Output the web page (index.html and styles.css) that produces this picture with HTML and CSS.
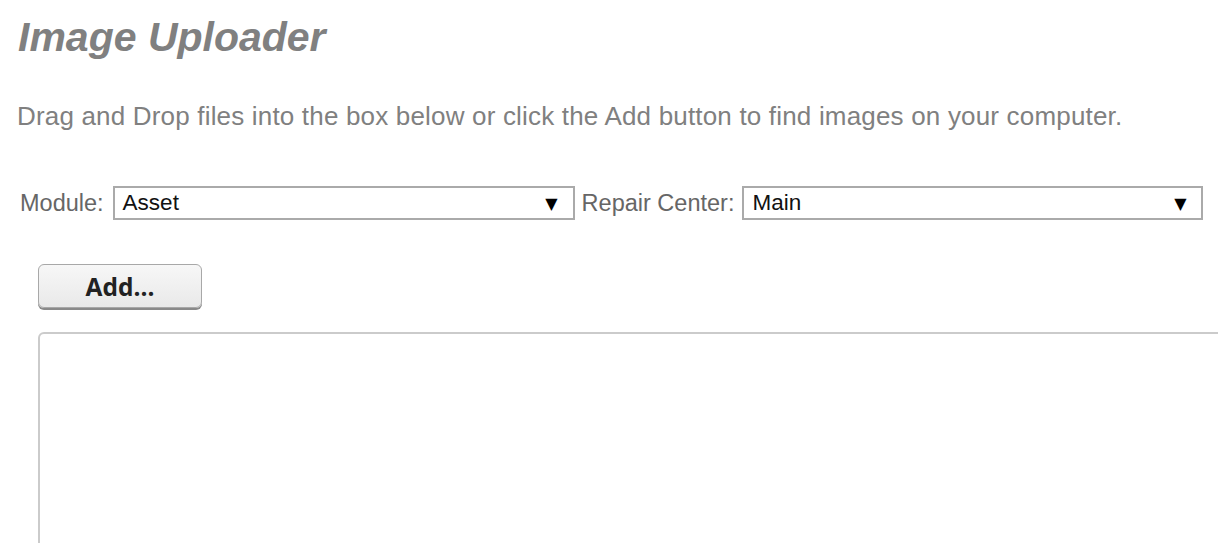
FILE: index.html
```html
<!DOCTYPE html>
<html>
<head>
<meta charset="utf-8">
<title>Image Uploader</title>
<link rel="stylesheet" href="styles.css">
</head>
<body>
<div class="page">
  <h1 class="title">Image Uploader</h1>
  <p class="intro">Drag and Drop files into the box below or click the Add button to find images on your computer.</p>
  <div class="filters">
    <label class="field-label">Module:</label>
    <div class="select select-module"><span class="select-value">Asset</span><span class="select-arrow">▼</span></div>
    <label class="field-label label-center">Repair Center:</label>
    <div class="select select-center"><span class="select-value">Main</span><span class="select-arrow">▼</span></div>
  </div>
  <div class="actions">
    <button class="add-btn" type="button">Add...</button>
  </div>
  <div class="dropzone"></div>
</div>
</body>
</html>
```

FILE: styles.css
```css
html, body {
  margin: 0;
  padding: 0;
  background: #fff;
  overflow: hidden;
}
body {
  font-family: "Liberation Sans", Arial, sans-serif;
}
.page {
  width: 1260px;
}
.title {
  margin: 15px 0 0 18px;
  font-size: 41px;
  font-weight: bold;
  font-style: italic;
  color: #808080;
  line-height: 44px;
}
.intro {
  margin: 42px 0 0 17px;
  font-size: 26px;
  letter-spacing: 0.18px;
  line-height: 30px;
  color: #808080;
}
.filters {
  display: flex;
  align-items: center;
  margin: 55px 0 0 20px;
}
.field-label {
  font-size: 23.5px;
  color: #666;
  margin-right: 9px;
}
.label-center {
  margin-left: 7px;
  margin-right: 8px;
}
.select {
  box-sizing: border-box;
  height: 34px;
  border: 2px solid #aaa;
  background: #fff;
  display: flex;
  align-items: center;
  justify-content: space-between;
  padding: 0 15px 0 8px;
}
.select-module {
  width: 462px;
}
.select-center {
  width: 461px;
}
.select-value {
  font-size: 22.5px;
  color: #111;
}
.select-arrow {
  font-size: 16px;
  color: #000;
  font-family: "DejaVu Sans", sans-serif;
}
.actions {
  margin: 44px 0 0 38px;
}
.add-btn {
  box-sizing: border-box;
  width: 164px;
  height: 44px;
  border: 1px solid #a8a8a8;
  border-radius: 6px;
  background: linear-gradient(#f7f7f7, #e9e9e9);
  box-shadow: 0 2px 0 #8a8a8a;
  font-family: "Open Sans", sans-serif;
  font-weight: bold;
  font-size: 24.5px;
  color: #222;
  padding: 0;
}
.dropzone {
  box-sizing: border-box;
  margin: 24px 0 0 38px;
  width: 1200px;
  height: 300px;
  border: 2px solid #cbcbcb;
  border-radius: 6px;
}
```
